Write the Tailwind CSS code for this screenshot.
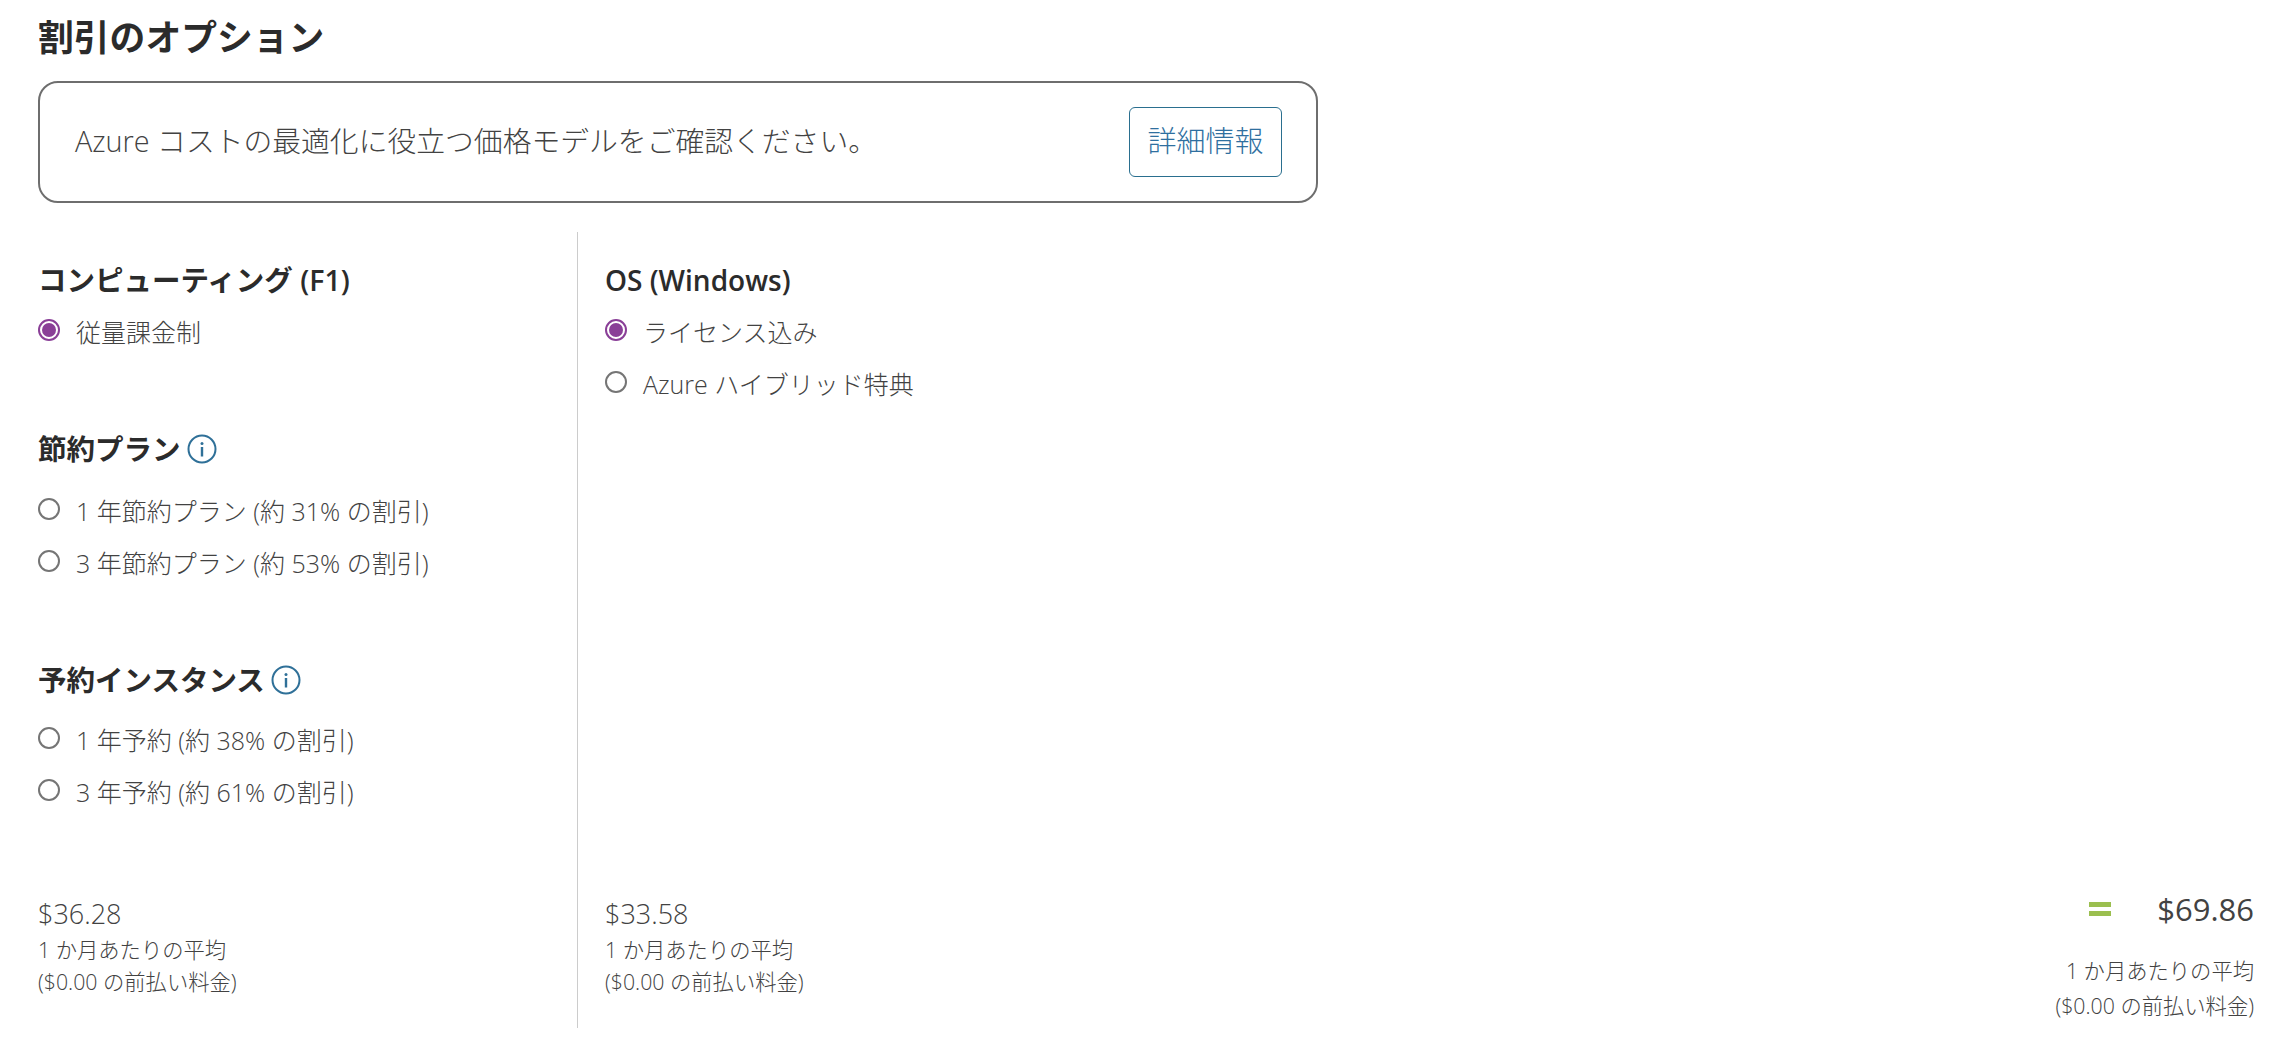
<!DOCTYPE html>
<html lang="ja">
  <head>
    <meta charset="UTF-8" />
    <script src="https://cdn.jsdelivr.net/npm/@tailwindcss/browser@4"></script>
    <title>割引のオプション</title>
  </head>
  <body class="bg-white h-[1048px] overflow-hidden text-[#424242] font-light font-['Open_Sans','Noto_Sans_CJK_JP',sans-serif]">
    <div class="pl-[38px] pr-[34px]">
      <h2 class="h-[81px] pt-[17px] text-[35.8px] leading-[40px] font-semibold text-[#2b2b2b]">割引のオプション</h2>

      <div class="w-[1280px] h-[122px] border-2 border-[#6e6e6e] rounded-[20px] flex items-center justify-between pl-[35px] pr-[34px]">
        <p class="text-[28.8px] leading-[36px] mb-[2px]">Azure コストの最適化に役立つ価格モデルをご確認ください。</p>
        <a class="w-[153px] h-[70px] border border-[#2a6f8f] rounded-[6px] flex items-center justify-center text-[29px] text-[#2f6f9f] pb-[2px]">詳細情報</a>
      </div>

      <div class="flex mt-[29px] h-[796px]">
        <div class="w-[540px] border-r border-[#cccccc] flex flex-col">
          <h3 class="mt-[29px] h-[38px] text-[28.5px] leading-[38px] font-semibold text-[#2b2b2b]">コンピューティング (F1)</h3>
          <label class="mt-[16px] h-[36px] flex items-center gap-[16px] text-[25px]">
            <span class="w-[22px] h-[22px] mb-[6px] rounded-full border-2 border-[#8a3f97] p-[2px] shrink-0"><span class="block w-full h-full rounded-full bg-[#8a3f97]"></span></span>
            従量課金制
          </label>

          <h3 class="mt-[79px] h-[38px] flex items-center gap-[6px] text-[28.5px] leading-[38px] font-semibold text-[#2b2b2b]">
            節約プラン
            <svg class="w-[30px] h-[30px]" viewBox="0 0 30 30" fill="none"><circle cx="15" cy="15" r="13.5" stroke="#2f7098" stroke-width="2"/><circle cx="15" cy="9.5" r="1.5" fill="#2f7098"/><rect x="13.8" y="13" width="2.4" height="9.5" fill="#2f7098"/></svg>
          </h3>
          <label class="mt-[26px] h-[36px] flex items-center gap-[16px] text-[25px]">
            <span class="w-[22px] h-[22px] mb-[6px] rounded-full border-2 border-[#757575] shrink-0"></span>
            1 年節約プラン (約 31% の割引)
          </label>
          <label class="mt-[16px] h-[36px] flex items-center gap-[16px] text-[25px]">
            <span class="w-[22px] h-[22px] mb-[6px] rounded-full border-2 border-[#757575] shrink-0"></span>
            3 年節約プラン (約 53% の割引)
          </label>

          <h3 class="mt-[79px] h-[38px] flex items-center gap-[6px] text-[28.5px] leading-[38px] font-semibold text-[#2b2b2b]">
            予約インスタンス
            <svg class="w-[30px] h-[30px]" viewBox="0 0 30 30" fill="none"><circle cx="15" cy="15" r="13.5" stroke="#2f7098" stroke-width="2"/><circle cx="15" cy="9.5" r="1.5" fill="#2f7098"/><rect x="13.8" y="13" width="2.4" height="9.5" fill="#2f7098"/></svg>
          </h3>
          <label class="mt-[24px] h-[36px] flex items-center gap-[16px] text-[25px]">
            <span class="w-[22px] h-[22px] mb-[6px] rounded-full border-2 border-[#757575] shrink-0"></span>
            1 年予約 (約 38% の割引)
          </label>
          <label class="mt-[16px] h-[36px] flex items-center gap-[16px] text-[25px]">
            <span class="w-[22px] h-[22px] mb-[6px] rounded-full border-2 border-[#757575] shrink-0"></span>
            3 年予約 (約 61% の割引)
          </label>

          <div class="mt-auto mb-[30px]">
            <p class="text-[27px] leading-[38px]">$36.28</p>
            <p class="text-[21.3px] leading-[32px] mt-[1px]">1 か月あたりの平均</p>
            <p class="text-[21.3px] leading-[32px]">($0.00 の前払い料金)</p>
          </div>
        </div>

        <div class="w-[400px] pl-[27px] flex flex-col">
          <h3 class="mt-[29px] h-[38px] text-[28px] leading-[38px] font-semibold text-[#2b2b2b]">OS (Windows)</h3>
          <label class="mt-[16px] h-[36px] flex items-center gap-[16px] text-[25px]">
            <span class="w-[22px] h-[22px] mb-[6px] rounded-full border-2 border-[#8a3f97] p-[2px] shrink-0"><span class="block w-full h-full rounded-full bg-[#8a3f97]"></span></span>
            ライセンス込み
          </label>
          <label class="mt-[16px] h-[36px] flex items-center gap-[16px] text-[25px]">
            <span class="w-[22px] h-[22px] mb-[6px] rounded-full border-2 border-[#757575] shrink-0"></span>
            Azure ハイブリッド特典
          </label>

          <div class="mt-auto mb-[30px]">
            <p class="text-[27px] leading-[38px]">$33.58</p>
            <p class="text-[21.3px] leading-[32px] mt-[1px]">1 か月あたりの平均</p>
            <p class="text-[21.3px] leading-[32px]">($0.00 の前払い料金)</p>
          </div>
        </div>

        <div class="flex-1 flex flex-col items-end justify-end mb-[5px]">
          <div class="flex items-center">
            <div class="flex flex-col gap-[4px] mr-[46px]">
              <span class="block w-[22px] h-[5px] bg-[#9bbf4f]"></span>
              <span class="block w-[22px] h-[5px] bg-[#9bbf4f]"></span>
            </div>
            <span class="text-[31px] leading-[44px] font-medium">$69.86</span>
          </div>
          <p class="text-[21.3px] leading-[35px] mt-[22px]">1 か月あたりの平均</p>
          <p class="text-[21.3px] leading-[35px]">($0.00 の前払い料金)</p>
        </div>
      </div>
    </div>
  </body>
</html>
